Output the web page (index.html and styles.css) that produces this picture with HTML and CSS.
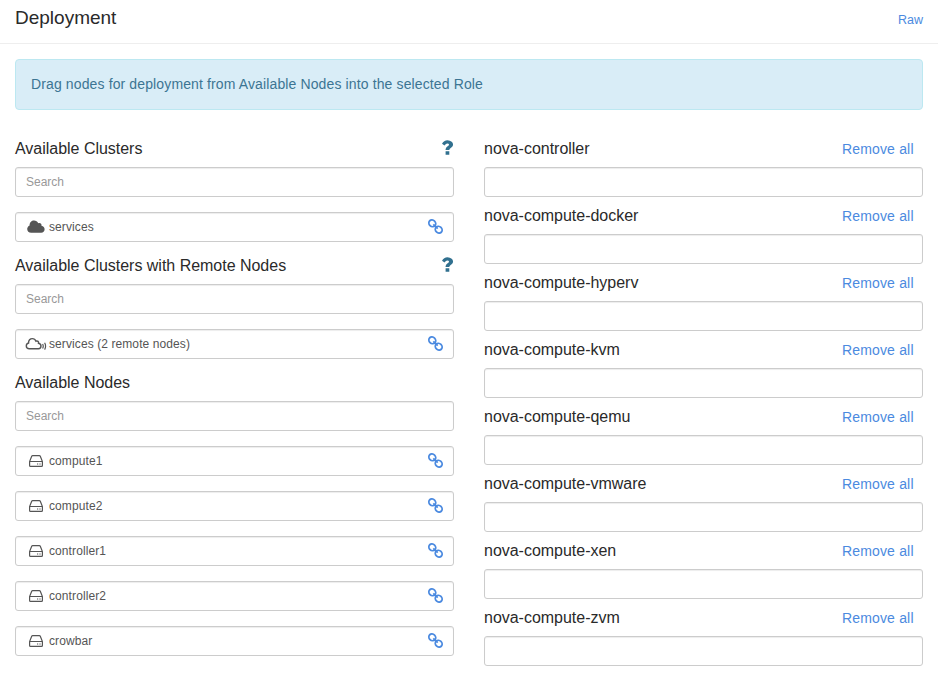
FILE: index.html
```
<!DOCTYPE html>
<html lang="en">
<head>
<meta charset="utf-8">
<title>Deployment</title>
<link rel="stylesheet" href="styles.css">
</head>
<body>
<svg class="defs" width="0" height="0" aria-hidden="true">
  <symbol id="link" viewBox="0 0 15 15"><g fill="none" stroke="currentColor" stroke-width="1.800"><ellipse cx="4.300" cy="4.300" rx="3.600" ry="3.200" transform="rotate(45 4.300 4.300)"/><ellipse cx="10.700" cy="10.700" rx="3.600" ry="3.200" transform="rotate(45 10.700 10.700)"/><path d="M5.300 5.300l4.400 4.400"/></g></symbol>
  <symbol id="drive" viewBox="0 0 14 12"><path fill="none" stroke="currentColor" stroke-width="1.200" d="M.6 6.500h12.800M2.700 1.300 .6 6.500v4q0 .9.900.9h11q.9 0 .9-.9v-4l-2.100-5.200q-.3-.7-1-.7H3.700q-.7 0-1 .7z"/><path d="M8 8.400h1.200v1.200H8zM10.400 8.400h1.200v1.200h-1.200z"/></symbol>
  <symbol id="cloud" viewBox="0 0 18 13"><path d="M4.200 12.800C1.800 12.800.2 11 .2 9 .2 7.300 1.200 6 2.600 5.400 2.400 2.700 4.600.6 7 .6 8.900.6 10.500 1.700 11.200 3.300 12.800 2.300 14.900 3.500 14.500 5.700 16.400 6.100 17.600 7.500 17.600 9.300 17.600 11.300 16.100 12.800 14.200 12.800z"/></symbol>
  <symbol id="cloud-remote" viewBox="0 0 22 13"><path fill="none" stroke="currentColor" stroke-width="1.400" d="M4.200 11.800C2.400 11.800 1.300 10.600 1.300 9 1.300 7.600 2.200 6.400 3.600 6 3.300 3.400 5.200 1.600 7.300 1.600 9.200 1.600 10.400 2.700 11 4.200 12.600 3.500 14 4.700 13.500 6.300 15 6.600 16 7.700 16 9.100 16 10.600 14.900 11.800 13.400 11.800z"/><path fill="none" stroke="currentColor" stroke-width="1.200" d="M17.600 7q1.300 2.200 0 4.500M19.600 5.800q2 3.400 0 6.800"/></symbol>
  <symbol id="help" viewBox="0 0 11 15"><path d="M3.600 11.200h3.700v3.600H3.600zM0 3.700Q1.800.2 5.500.2 8 .2 9.700 1.700 11.300 3.200 11 5.200 10.600 7 8.700 8 7.300 8.800 7.300 10.100H3.600Q3.300 7.500 5.600 6.200 7.200 5.400 7 4.500 6.800 3.400 5.300 3.400 4 3.400 2.500 5.500z"/></symbol>
</svg>
<header class="page-header"><h1>Deployment</h1><a class="raw" href="#">Raw</a></header>
<main>
  <div class="alert">Drag nodes for deployment from Available Nodes into the selected Role</div>
  <div class="columns">
    <div class="available">
      <section>
        <h2>Available Clusters<svg class="help"><use href="#help"/></svg></h2>
        <input class="box" type="text" placeholder="Search">
        <div class="box item"><svg class="cloud"><use href="#cloud"/></svg><span>services</span><svg class="link"><use href="#link"/></svg></div>
      </section>
      <section>
        <h2>Available Clusters with Remote Nodes<svg class="help"><use href="#help"/></svg></h2>
        <input class="box" type="text" placeholder="Search">
        <div class="box item"><svg class="remote"><use href="#cloud-remote"/></svg><span>services (2 remote nodes)</span><svg class="link"><use href="#link"/></svg></div>
      </section>
      <section>
        <h2>Available Nodes</h2>
        <input class="box" type="text" placeholder="Search">
        <div class="box item"><svg class="drive"><use href="#drive"/></svg><span>compute1</span><svg class="link"><use href="#link"/></svg></div>
        <div class="box item"><svg class="drive"><use href="#drive"/></svg><span>compute2</span><svg class="link"><use href="#link"/></svg></div>
        <div class="box item"><svg class="drive"><use href="#drive"/></svg><span>controller1</span><svg class="link"><use href="#link"/></svg></div>
        <div class="box item"><svg class="drive"><use href="#drive"/></svg><span>controller2</span><svg class="link"><use href="#link"/></svg></div>
        <div class="box item"><svg class="drive"><use href="#drive"/></svg><span>crowbar</span><svg class="link"><use href="#link"/></svg></div>
      </section>
    </div>
    <div class="roles">
      <section class="role"><h2>nova-controller<a href="#">Remove all</a></h2><div class="box"></div></section>
      <section class="role"><h2>nova-compute-docker<a href="#">Remove all</a></h2><div class="box"></div></section>
      <section class="role"><h2>nova-compute-hyperv<a href="#">Remove all</a></h2><div class="box"></div></section>
      <section class="role"><h2>nova-compute-kvm<a href="#">Remove all</a></h2><div class="box"></div></section>
      <section class="role"><h2>nova-compute-qemu<a href="#">Remove all</a></h2><div class="box"></div></section>
      <section class="role"><h2>nova-compute-vmware<a href="#">Remove all</a></h2><div class="box"></div></section>
      <section class="role"><h2>nova-compute-xen<a href="#">Remove all</a></h2><div class="box"></div></section>
      <section class="role"><h2>nova-compute-zvm<a href="#">Remove all</a></h2><div class="box"></div></section>
    </div>
  </div>
</main>
</body>
</html>
```
FILE: styles.css
```
* { box-sizing: border-box; }
body { margin: 0; background: #fff; color: #333; font: 14px/20px "Liberation Sans", Arial, sans-serif; overflow: hidden; }
svg { fill: currentColor; flex: none; overflow: visible; }
.defs { position: absolute; }
a { color: #4b8ae0; text-decoration: none; }
h1, h2 { margin: 0; font-weight: 400; color: #2a2a2a; }
.page-header { height: 44px; padding: 0 15px 8px; border-bottom: 1px solid #eee; display: flex; align-items: center; justify-content: space-between; }
h1 { font-size: 19px; line-height: 20px; padding-top: 1px; }
.raw { font-size: 12.5px; padding-top: 4px; }
main { padding: 15px 15px 0; }
.alert { height: 51px; padding: 14px 15px; letter-spacing: .125px; color: #3c7593; background: #d9edf7; border: 1px solid #bce8f1; border-radius: 4px; }
.columns { display: grid; grid-template-columns: 1fr 1fr; gap: 30px; margin-top: 27px; }
h2 { height: 30px; padding-bottom: 7px; font-size: 16px; line-height: 23px; letter-spacing: -.02px; display: flex; align-items: center; justify-content: space-between; }
.box { display: block; width: 100%; height: 30px; border: 1px solid #ccc; border-radius: 3px; background: #fff; box-shadow: inset 0 1px 1px rgba(0, 0, 0, .075); padding: 0 10px; font: 12px/18px "Liberation Sans", Arial, sans-serif; color: #555; }
.box::placeholder { color: #999; opacity: 1; }
.available .box { margin-bottom: 15px; }
.available section { margin-bottom: -3px; }
.item { display: flex; align-items: center; }
.item span { flex: 1; letter-spacing: .09px; }
.cloud { width: 18px; height: 13px; margin: 0 4px 1px 1px; }
.remote { width: 22px; height: 13px; margin: 0 2px 1px -1px; }
.drive { width: 14px; height: 12px; margin: 0 6px 0 3px; }
.link { width: 15px; height: 15px; margin-bottom: 1px; color: #4b8ae0; }
.help { width: 11px; height: 15px; margin: 0 1px 2px 0; color: #31708f; }
.role { margin-bottom: 7px; }
.role a { font-size: 14px; line-height: 21px; letter-spacing: .18px; padding-top: 2px; margin-right: 9.300px; }
```
